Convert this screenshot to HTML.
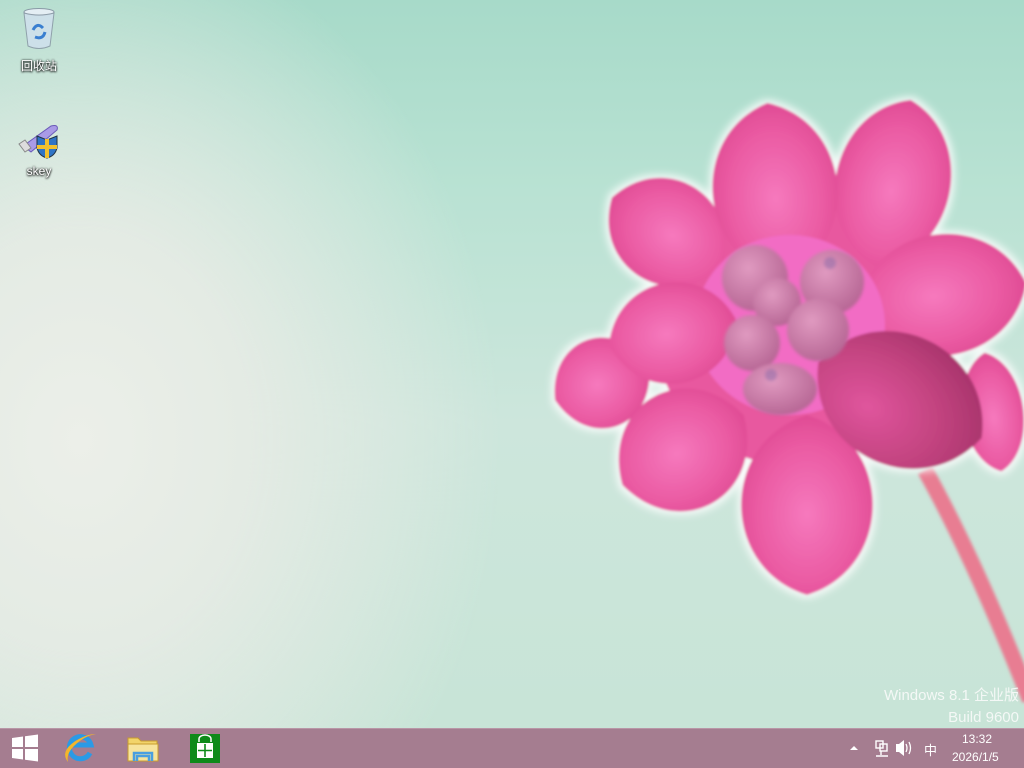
<!DOCTYPE html>
<html><head><meta charset="utf-8">
<style>
html,body{margin:0;padding:0;width:1024px;height:768px;overflow:hidden}
body{position:relative;font-family:"Liberation Sans","Noto Sans CJK SC",sans-serif;
background:
radial-gradient(ellipse 420px 520px at 80px 440px,#ecefe9 0%,#e4ebe4 40%,rgba(220,234,226,0) 100%),
linear-gradient(180deg,#a7dac9 0%,#b9e2d3 25%,#cde6dc 55%,#c7e4d6 100%);}
.icon{position:absolute;width:70px;text-align:center;color:#fff;font-size:12px;text-shadow:0 0 2px #000,0 1px 2px #000}
.wm{position:absolute;right:5px;color:#f4f8f6;font-size:15px;text-align:right}
.tb{position:absolute;left:0;top:728px;width:1024px;height:40px;background:#a57d90;border-top:1px solid #b896a6}
.tray{position:absolute;color:#fff;font-size:12px}
</style></head><body>

<svg width="1024" height="728" style="position:absolute;left:0;top:0">
<defs>
<filter id="b" x="-20%" y="-20%" width="140%" height="140%"><feGaussianBlur stdDeviation="1.5"/></filter>
<filter id="glow" x="-20%" y="-20%" width="140%" height="140%">
<feMorphology in="SourceAlpha" operator="dilate" radius="3" result="d"/>
<feGaussianBlur in="d" stdDeviation="4" result="bl"/>
<feFlood flood-color="#ffffff" flood-opacity="0.85"/>
<feComposite in2="bl" operator="in" result="w"/>
<feGaussianBlur in="SourceGraphic" stdDeviation="1.3" result="s"/>
<feMerge><feMergeNode in="w"/><feMergeNode in="s"/></feMerge>
</filter>
<radialGradient id="p" cx="50%" cy="55%" r="60%"><stop offset="0" stop-color="#f679bd"/><stop offset="0.65" stop-color="#ea5aa2"/><stop offset="1" stop-color="#dc4790"/></radialGradient>
<radialGradient id="pd" cx="35%" cy="35%" r="70%"><stop offset="0" stop-color="#e0559d"/><stop offset="0.6" stop-color="#c2437f"/><stop offset="1" stop-color="#a8346c"/></radialGradient>
<radialGradient id="bud" cx="40%" cy="35%" r="65%"><stop offset="0" stop-color="#e09ac0"/><stop offset="1" stop-color="#b86896"/></radialGradient>
<path id="pt" d="M0,-50 C45,-35 45,35 0,50 C-45,35 -45,-35 0,-50Z"/>
</defs>
<path d="M925 470 Q975 560 1030 700" stroke="#e87d92" stroke-width="16" fill="none" filter="url(#b)"/>
<g filter="url(#glow)">
<circle cx="790" cy="330" r="135" fill="#e8589f"/>
<use href="#pt" fill="url(#p)" transform="translate(993 412) rotate(-8) scale(0.9 1.2)"/>
<use href="#pt" fill="url(#p)" transform="translate(602 383) rotate(70) scale(1.35 1.0)"/>
<use href="#pt" fill="url(#p)" transform="translate(667 232) rotate(-58) scale(1.55 1.3)"/>
<use href="#pt" fill="url(#p)" transform="translate(893 183) rotate(12) scale(1.7 1.7)"/>
<use href="#pt" fill="url(#p)" transform="translate(775 190) rotate(-5) scale(1.85 1.75)"/>
<use href="#pt" fill="url(#p)" transform="translate(942 295) rotate(82) scale(1.8 1.7)"/>
<use href="#pt" fill="url(#p)" transform="translate(683 450) rotate(60) scale(1.8 1.4)"/>
<use href="#pt" fill="url(#p)" transform="translate(807 505) rotate(0) scale(1.95 1.8)"/>
<ellipse cx="790" cy="325" rx="95" ry="90" fill="#f26cc4"/>
<use href="#pt" fill="url(#p)" transform="translate(673 333) rotate(80) scale(1.5 1.3)"/>
<use href="#pt" fill="url(#pd)" transform="translate(900 400) rotate(-65) scale(1.95 1.8)"/>
</g>
<g filter="url(#b)">
<circle cx="755" cy="278" r="33" fill="url(#bud)"/>
<circle cx="832" cy="282" r="32" fill="url(#bud)"/>
<circle cx="777" cy="302" r="24" fill="url(#bud)"/>
<circle cx="752" cy="343" r="28" fill="url(#bud)"/>
<circle cx="818" cy="330" r="31" fill="url(#bud)"/>
<ellipse cx="780" cy="389" rx="37" ry="26" fill="url(#bud)"/>
<circle cx="830" cy="263" r="6" fill="#8a6aa8" opacity="0.5"/>
<circle cx="771" cy="375" r="6" fill="#8a6aa8" opacity="0.5"/>
</g>
</svg>

<div class="icon" style="left:4px;top:6px">
<svg width="40" height="48" viewBox="0 0 40 48" style="display:block;margin:0 auto 3px">
<ellipse cx="20" cy="6" rx="15" ry="3.5" fill="#e4eef4" stroke="#8a9aa6"/>
<path d="M5 7 L9 40 Q20 45 31 40 L35 7 Q20 11 5 7Z" fill="#cfe0ec" stroke="#8a9aa6" opacity="0.9"/>
<path d="M14 24 q4 -8 10 -2 M26 26 q-2 8 -10 5" stroke="#3a7fd0" stroke-width="3" fill="none"/>
</svg>回收站</div>
<div class="icon" style="left:4px;top:120px">
<svg width="44" height="42" viewBox="0 0 44 42" style="display:block;margin:0 auto 2px">
<path d="M6 26 L34 6 Q42 4 40 10 L14 32 Z" fill="#a99be6" stroke="#6a5ab8"/>
<path d="M2 24 L8 20 L14 28 L8 32Z" fill="#ddd" stroke="#888"/>
<path d="M30 20 L40 16 L40 28 Q38 36 30 38 Q22 36 20 28 L20 16Z" fill="#2f74c6" stroke="#234"/>
<path d="M30 19 L30 38 M20 27 L40 27" stroke="#f2c12e" stroke-width="4"/>
</svg>skey</div>

<div class="wm" style="top:684px">Windows 8.1 企业版</div>
<div class="wm" style="top:709px">Build 9600</div>

<div class="tb"></div>
<svg width="260" height="40" style="position:absolute;left:0;top:728px">
<g fill="#fff"><path d="M12 10 L23 8.5 V19 H12Z M25 8.2 L38 6.5 V19 H25Z M12 21 H23 V31.5 L12 30Z M25 21 H38 V33.5 L25 31.8Z"/></g>
<path d="M90 25 A11 11 0 1 1 91 17 H71" stroke="#2a9ae6" stroke-width="5" fill="none"/>
<path d="M68 34 Q60 24 74 14 Q86 6 96 6 Q84 8 74 18 Q66 26 68 34Z" fill="#f3b62b"/>
<path d="M128 10 h10 l3 3 h16 v18 h-29Z" fill="#f2d46a" stroke="#c89b2e"/>
<rect x="128" y="16" width="30" height="17" fill="#f7e49c" stroke="#c89b2e"/>
<path d="M134 33 v-8 h18 v8 M137 33 v-5 h12 v5" stroke="#4a9fe0" stroke-width="2.5" fill="none"/>
<rect x="190" y="6" width="30" height="29" fill="#0e8a1a"/>
<path d="M199 14 v-3 a6 4 0 0 1 12 0 v3" stroke="#fff" fill="none" stroke-width="1.5"/>
<path d="M197 15 h16 v15 h-16Z" fill="#fff"/>
<path d="M205 16 v13 M198 22.5 h14" stroke="#0e8a1a" stroke-width="1.6"/>
</svg>
<svg width="100" height="40" style="position:absolute;left:840px;top:728px">
<path d="M10 22 l4 -4 l4 4Z" fill="#fff"/>
<g stroke="#fff" fill="none" stroke-width="1.4"><rect x="36" y="13" width="7" height="7"/><rect x="40" y="16" width="7" height="7"/><path d="M41 23 v4 M36 28 h12"/></g>
<path d="M56 16 h3 l5 -4 v16 l-5 -4 h-3Z" fill="#fff"/>
<path d="M66 16 q2 4 0 8 M69 14 q3 6 0 12" stroke="#fff" fill="none" stroke-width="1.3"/>
</svg>
<div class="tray" style="left:924px;top:740px;font-size:13px">中</div>
<div class="tray" style="left:962px;top:732px">13:32</div>
<div class="tray" style="left:952px;top:750px">2026/1/5</div>
</body></html>
